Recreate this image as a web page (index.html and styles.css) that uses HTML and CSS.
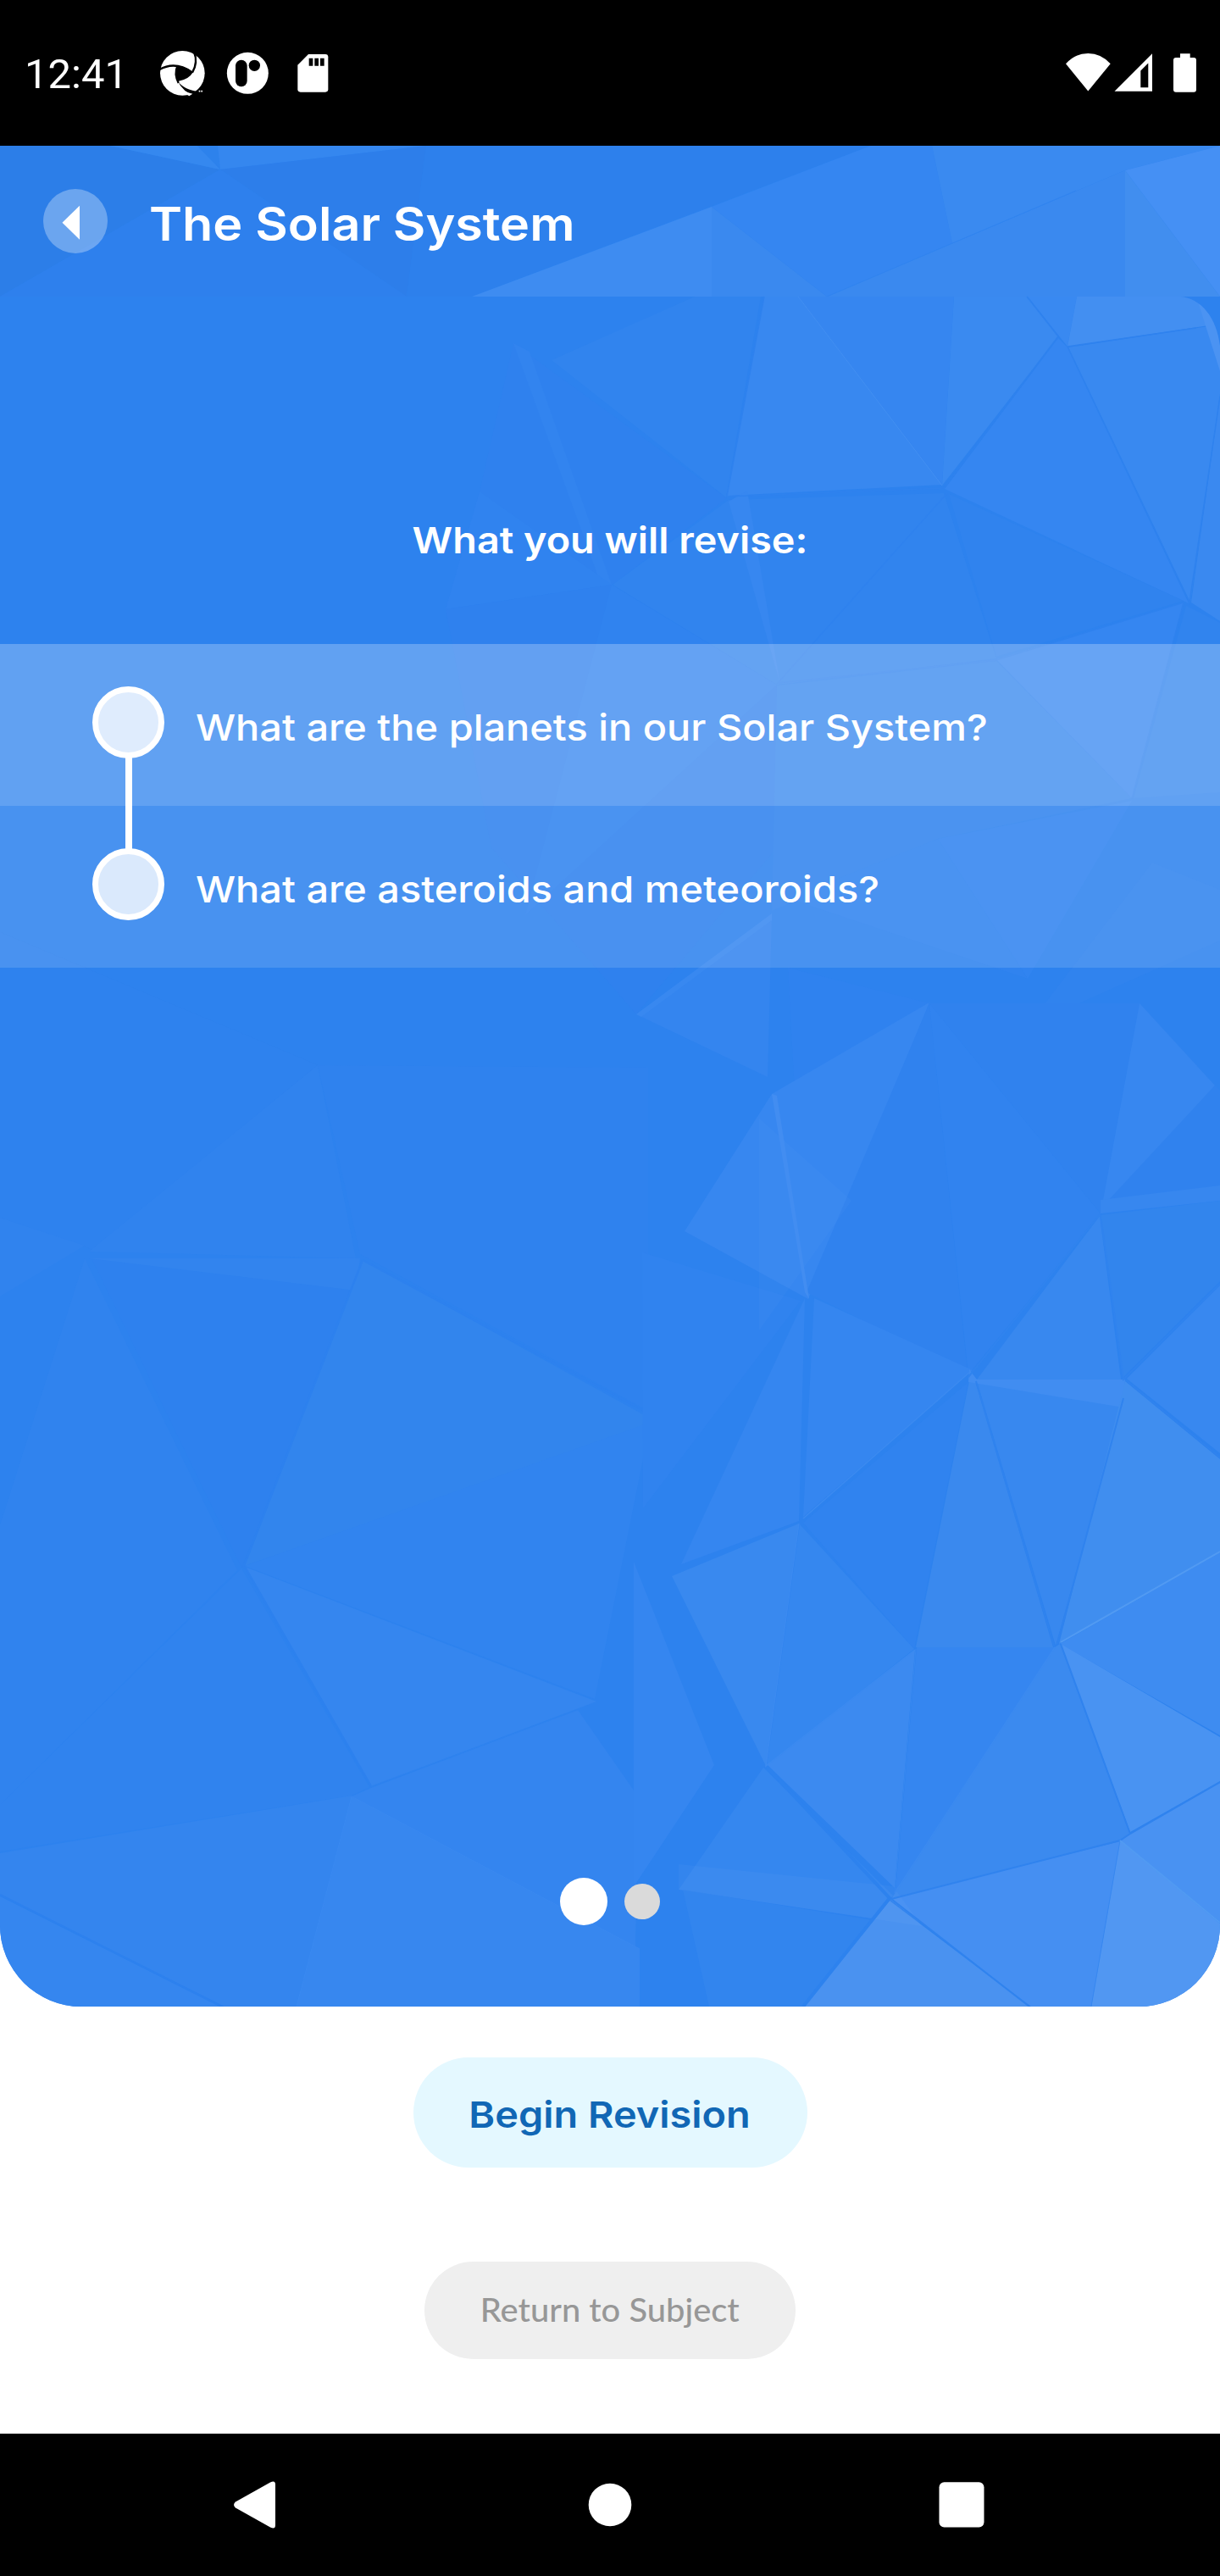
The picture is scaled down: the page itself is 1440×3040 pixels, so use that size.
FILE: index.html
```html
<!DOCTYPE html>
<html lang="en">
<head>
<meta charset="utf-8">
<title>The Solar System</title>
<link rel="stylesheet" href="styles.css">
</head>
<body>
<div class="screen">
  <div class="status-bar">
    <span class="clock">12:41</span>
    <svg class="notifications" width="220" height="80" viewBox="180 46 220 80" aria-hidden="true">
      <g transform="translate(10 50) scale(.33333)">
        <circle cx="616" cy="109" r="79" fill="#fff"/>
        <path d="M596 84 Q632 84 652 107 Q640 130 600 138 Q588 112 596 84Z" fill="#000"/>
        <g fill="none" stroke="#000" stroke-width="7">
          <path d="M534 97Q590 64 652 107"/>
          <path d="M657 34Q672 70 651 107"/>
          <path d="M598 84Q586 112 602 144"/>
        </g>
        <path d="M599 136Q618 168 680 176L664 192Q616 176 599 136Z" fill="#000"/>
        <path d="M602 150Q616 176 652 182L640 190Q610 176 602 150Z" fill="#fff"/>
        <path d="M674 173h5M682 173h5" stroke="#fff" stroke-width="5"/>
        <circle cx="847" cy="109" r="73.500" fill="#fff"/>
        <rect x="804" y="62" width="41" height="95" rx="20.500"/>
        <circle cx="871" cy="82" r="20"/>
        <path d="M1062 42H1122Q1132 42 1132 52V166Q1132 176 1122 176H1034Q1024 176 1024 166V80Z" fill="#fff"/>
        <path d="M1064 56h14v27h-14zM1084 56h14v27h-14zM1104 56h14v27h-14z"/>
      </g>
    </svg>
    <svg class="indicators" width="170" height="60" viewBox="1250 56 170 60" fill="#fff" aria-hidden="true">
      <path d="M1258 75.300Q1269 63 1284.300 63T1310.700 75.300L1284.300 107.500Z"/>
      <path fill-rule="evenodd" d="M1315.500 107.800L1360 63.300V107.800ZM1346.300 83.500V103.200H1355.300V74.500Z"/>
      <path d="M1393 63.300h11.700V68h4.300q3 0 3 3v34.700q0 3-3 3h-21q-3 0-3-3V71q0-3 3-3h5z"/>
    </svg>
  </div>

  <main class="stage">
    <svg class="facets" width="1440" height="2196" viewBox="0 172 1440 2196" aria-hidden="true">
      <g id="header-facets">
        <path fill="#2c7ee8" d="M0 172H130L260 200L0 350Z"/>
        <path fill="#3588ef" d="M130 172H233L260 200Z"/>
        <path fill="#2d82ec" d="M233 172H257L260 200Z"/>
        <path fill="#3587ef" d="M257 172H503L260 200Z"/>
        <path fill="#2d7eea" d="M503 172L260 200L480 350Z"/>
        <path fill="#2e80ed" d="M0 350L260 200L480 350Z"/>
        <path fill="#2d80ec" d="M503 172H1028L557 350H480Z"/>
        <path fill="#3e8cf1" d="M557 350L840 244V350Z"/>
        <path fill="#3a89ef" d="M840 244L976 350H840Z"/>
        <path fill="#3586f1" d="M840 244L1028 172H1100L1124 287L976 350Z"/>
        <path fill="#3a8af0" d="M1100 172H1440L1328 201L1124 287Z"/>
        <path fill="#3a89ef" d="M976 350L1328 201V350Z"/>
        <path fill="#418eef" d="M1328 201L1440 350H1328Z"/>
        <path fill="#4590f4" d="M1328 201L1440 172V350Z"/>
        <path stroke="#3184ef" d="M976 350L1270 225"/>
      </g>
      <g id="upper-facets">
        <path fill="#2d82ee" d="M0 350H1440V900H0Z"/>
        <path fill="#2f81ee" d="M606 405L858 588L723 690L526 719L566 580Z"/>
        <path fill="#3284ef" d="M606 405L625 415L722 690L712 697Z"/>
        <path fill="#3083ef" d="M566 580L722 690L526 719Z"/>
        <path fill="#2f81ee" d="M526 719L722 690L917 808V1000L751 1197L580 1000Z"/>
        <path fill="#3083ef" d="M722 690L917 808L620 1080Z"/>
        <path fill="#3184ee" d="M651 425L820 350H898L857 587Z"/>
        <path fill="#3888f0" d="M902 350H942L1112 572L858 585Z"/>
        <path fill="#3686f0" d="M942 350H1126L1112 572Z"/>
        <path fill="#3a8af0" d="M1126 350H1212L1249 397L1112 573Z"/>
        <path fill="#3989f1" d="M1213 350H1271L1260 409Z"/>
        <path fill="#438ff1" d="M1271 350H1440V382L1260 409Z"/>
        <path fill="#3989f0" d="M1261 410L1440 383V465L1405 711Z"/>
        <path fill="#4b93f2" d="M1412 350H1440V438Z"/>
        <path fill="#3586f1" d="M1249 399L1260 410L1403 712L1115 577Z"/>
        <path fill="#3a89f0" d="M1440 468L1406 711L1440 733Z"/>
        <path fill="#3184ee" d="M723 690L860 590L1114 582L1176 777L917 808Z"/>
        <path fill="#3083ee" d="M1120 583L1397 709L1176 775Z"/>
        <path fill="#3787f0" d="M860 592L882 579L921 808Z"/>
        <path fill="#3184ee" d="M917 809L1176 780L1336 942L1107 990L911 1075Z"/>
        <path fill="#3586f1" d="M1176 778L1397 711L1336 942Z"/>
        <path fill="#3184ee" d="M1400 715L1440 735V935L1338 942Z"/>
        <path fill="#3184f0" d="M1107 990L1336 945L1213 1155Z"/>
        <path fill="#3083ef" d="M930 1060L1107 990L1213 1155Z"/>
        <path fill="#3083ee" d="M1213 1211L1360 1018L1440 1050V1110Z"/>
        <path fill="none" stroke="#2f82ee" stroke-width="1.500" d="M902 350L858 586L1114 576L1249 397L1212 350M1260 409L1404 711L1440 468M1118 582L918 806L1176 779L1397 711L1336 942M1260 409L1412 387"/>
        <path fill="none" stroke="#438ff1" d="M942 350L1112 573"/>
        <path fill="#2d82ee" d="M1393 350H1440V408C1436 375 1418 352 1393 350Z"/>
        <path fill="#3485ef" d="M751 1197L911 1080L906 1271Z"/>
        <path fill="#3888f0" d="M751 1197L911 1078V1086L757 1200Z"/>
      </g>
      <g id="left-facets">
        <path fill="#2f81ee" d="M0 1100L375 1257L110 1475L0 1437Z" opacity=".5"/>
        <path fill="#3083ee" d="M0 1437L100 1470L0 1530Z"/>
        <path fill="#3083ee" d="M105 1477L375 1257L420 1485Z"/>
        <path fill="#2e81ee" d="M108 1485L422 1523L285 1850Z"/>
        <path fill="#3284ee" d="M105 1485H425L420 1523Z"/>
        <path fill="#3083ee" d="M100 1485L280 1853L0 2130V1800Z"/>
        <path fill="#2f82ee" d="M425 1480L375 1257L765 1260V1665Z"/>
        <path fill="#3285ed" d="M428 1487L764 1672L770 1680L289 1848Z"/>
        <path fill="#3184ef" d="M770 1667L702 2005L289 1848L764 1680Z"/>
        <path fill="#3586ef" d="M289 1849L704 2008L438 2108Z"/>
        <path fill="#3083ee" d="M285 1851L436 2109L415 2119L0 2185V2130Z"/>
        <path fill="#3485ee" d="M0 2187L415 2119L350 2368H265L0 2236Z"/>
        <path fill="#3586ef" d="M0 2238L260 2368H0Z"/>
        <path fill="#3485ef" d="M438 2110L682 2018L753 2120L750 2300L415 2120Z"/>
        <path fill="#3787ef" d="M415 2120L755 2300V2368H350Z"/>
        <path fill="none" stroke="#2d81ee" stroke-width="2.500" d="M428 1487L764 1667M0 2236L262 2368M428 1487L287 1850M289 1849L438 2108"/>
        <path fill="none" stroke="#3083ee" d="M438 2108L682 2018"/>
        <path fill="none" stroke="#3a89f0" d="M415 2120L350 2368M415 2120L755 2300"/>
      </g>
      <g id="right-facets">
        <path fill="#3083ef" d="M758 1478L945 1535L759 1780Z"/>
        <path fill="#2f82ef" d="M930 1142L1097 1184L1160 1220L940 1325Z"/>
        <path fill="#3787f0" d="M1097 1183L911 1291L808 1453L954 1533Z"/>
        <path fill="#3082ee" d="M1097 1184L1142 1620L952 1525Z"/>
        <path fill="#3183ef" d="M1097 1184L1299 1432L1143 1622Z"/>
        <path fill="#3082ee" d="M1097 1184H1345L1299 1432Z"/>
        <path fill="#3787f0" d="M1345 1184L1434 1281L1299 1432Z"/>
        <path fill="#3082ee" d="M1434 1281L1440 1287V1400L1305 1420Z"/>
        <path fill="#3787ef" d="M1299 1416L1440 1399V1417L1299 1432Z"/>
        <path fill="#3285ed" d="M1299 1434L1440 1417V1512L1325 1626Z"/>
        <path fill="#3888ef" d="M1298 1435L1323 1628H1153Z"/>
        <path fill="#3586f0" d="M961 1532L1148 1617L948 1790Z"/>
        <path fill="#3586f0" d="M950 1532L943 1795L804 1846Z"/>
        <path fill="#3083ef" d="M1143 1631L1079 1946L948 1797Z"/>
        <path fill="#3a89ee" d="M1144 1630H1151L1243 1944H1081Z"/>
        <path fill="#3888ef" d="M1153 1630L1324 1660L1246 1942Z"/>
        <path fill="#418df1" d="M1144 1616L1153 1628H1328L1326 1661L1143 1631Z"/>
        <path fill="#3888f0" d="M1330 1627L1440 1517V1715Z"/>
        <path fill="#408eef" d="M1328 1630L1440 1722V1832L1250 1940Z"/>
        <path fill="#3989ef" d="M793 1860L943 1798L904 2084Z"/>
        <path fill="#3587ef" d="M944 1799L1079 1946L905 2084Z"/>
        <path fill="#3c8af0" d="M1080 1947L1056 2228L906 2083Z"/>
        <path fill="#3586f0" d="M1082 1944H1245L1057 2232Z"/>
        <path fill="#3b8aef" d="M1245 1944L1251 1940L1334 2165L1322 2172L1052 2241Z"/>
        <path fill="#3e8cf1" d="M1251 1940L1440 1832V2048Z"/>
        <path fill="#4993f2" d="M1252 1940L1440 2050V2102L1334 2162Z"/>
        <path fill="#4992f2" d="M1334 2164L1440 2104V2268L1322 2172Z"/>
        <path fill="#5197f2" d="M1322 2172L1440 2270V2368H1288Z"/>
        <path fill="#458ff2" d="M1322 2173L1288 2368H1217L1050 2241Z"/>
        <path fill="#4a92f0" d="M1050 2243L1215 2368H948Z"/>
        <path fill="#3587ef" d="M901 2086L1054 2237L1030 2264L801 2230Z"/>
        <path fill="#3285ee" d="M806 2230L1030 2266L948 2368H837Z"/>
        <path fill="#fff" opacity=".03" d="M801 2200L1054 2226L1088 2273L801 2230Z"/>
        <path fill="#3586f0" d="M748 1843L843 2083L751 2222H748Z"/>
        <path fill="#fff" opacity=".02" d="M896 1320L1005 1417L896 1570Z"/>
        <path fill="#428df1" d="M911 1291L917 1293L955 1533L950 1525Z"/>
        <path fill="none" stroke="#3083ee" stroke-width="2" d="M1328 1628L1440 1720M1326 1650L1248 1940M1152 1630L1244 1942M1252 1940L1334 2164L1440 2103M1334 2164L1322 2172L1052 2241L1215 2368M1299 1434L1326 1628L1440 1515M1143 1625L1299 1432"/>
        <path fill="none" stroke="#3888f0" stroke-width="1" d="M1322 2172L1288 2368M1081 1946L1056 2234"/>
        <path fill="none" stroke="#2d82ee" stroke-width="4" d="M904 2084L1050 2240L948 2368"/>
        <path fill="none" stroke="#519af2" stroke-width="2" d="M1252 1938L1440 1831M1322 2172L1440 2269"/>
        <path fill="none" stroke="#3b8af0" stroke-width="1.500" d="M943 1798L904 2084L1080 1947M1245 1944L1056 2234M1146 1618L948 1792"/>
      </g>
    </svg>

    <header class="app-bar">
      <button class="back" aria-label="Back">
        <svg width="76" height="76" viewBox="0 0 76 76"><path d="M22.500 39.700L43 19.700V59.700Z" fill="#fff"/></svg>
      </button>
      <h1 class="title">The Solar System</h1>
    </header>

    <section class="panel">
      <h2 class="subtitle">What you will revise:</h2>
      <ol class="topics">
        <li class="topic topic-first"><span class="marker marker-linked"></span><span class="label">What are the planets in our Solar System?</span></li>
        <li class="topic"><span class="marker"></span><span class="label">What are asteroids and meteoroids?</span></li>
      </ol>
      <div class="pager"><span class="page page-current"></span><span class="page"></span></div>
    </section>
  </main>

  <div class="actions">
    <button class="btn btn-primary"><span class="btn-text">Begin Revision</span></button>
    <button class="btn btn-secondary"><span class="btn-text">Return to Subject</span></button>
  </div>

  <nav class="nav-bar">
    <svg width="1440" height="168" viewBox="0 2872 1440 168" fill="#fff" aria-hidden="true">
      <path d="M278 2952.500L319 2929.500Q325 2926.500 325 2932V2980Q325 2985.500 319 2982.500L278 2959.500Q274 2956 278 2952.500Z"/>
      <circle cx="720" cy="2956" r="25.300"/>
      <rect x="1108.500" y="2929.300" width="53" height="53.300" rx="6"/>
    </svg>
  </nav>
</div>
</body>
</html>
```
FILE: styles.css
```css
* { box-sizing: border-box; }

body {
  margin: 0;
  background: #fff;
  font-family: Inter, "Open Sans", sans-serif;
}

h1, h2, ol { margin: 0; padding: 0; }

button { border: 0; padding: 0; font-family: inherit; }

svg { display: block; flex-shrink: 0; }

.screen {
  width: 1440px;
  height: 3040px;
  display: flex;
  flex-direction: column;
  overflow: hidden;
}

.status-bar {
  height: 172px;
  padding: 0 20px 0 29px;
  display: flex;
  align-items: center;
  background: #000;
  color: #fff;
}

.clock {
  width: 151px;
  flex-shrink: 0;
  font: 400 49px/56px Roboto, sans-serif;
  padding-top: 3px;
}

.indicators { margin-left: auto; }

.stage {
  position: relative;
  height: 2196px;
  border-radius: 0 0 96px 96px;
  overflow: hidden;
  background: #2d82ee;
  color: #fff;
}

.facets {
  position: absolute;
  inset: 0;
}

.app-bar {
  position: relative;
  height: 178px;
  padding-left: 51px;
  display: flex;
  align-items: center;
  gap: 49px;
}

.back {
  width: 76px;
  height: 76px;
  border-radius: 50%;
  background: rgba(255, 255, 255, .3);
}

/* The interface typeface is set slightly extended. */
.title {
  font-size: 55px;
  font-weight: 600;
  line-height: 70px;
  padding-top: 6px;
  white-space: nowrap;
  transform: scaleX(1.077);
  transform-origin: left;
}

.panel {
  position: relative;
  height: 2018px;
  padding-top: 257px;
  display: flex;
  flex-direction: column;
}

.subtitle {
  height: 153px;
  font-size: 43px;
  font-weight: 600;
  line-height: 60px;
  text-align: center;
  white-space: nowrap;
  transform: scaleX(1.087);
}

.topics { list-style: none; }

.topic {
  height: 191px;
  padding-left: 109px;
  display: flex;
  align-items: center;
  gap: 37px;
  background: rgba(255, 255, 255, .13);
}

.topic-first { background: rgba(255, 255, 255, .25); }

.marker {
  position: relative;
  width: 85px;
  height: 85px;
  margin-bottom: 7px;
  border: 7px solid #fff;
  border-radius: 50%;
  background: rgba(255, 255, 255, .8);
}

.marker-linked::after {
  content: "";
  position: absolute;
  left: 31.500px;
  top: 77px;
  width: 8px;
  height: 109px;
  background: #fff;
}

.label {
  font-size: 43px;
  font-weight: 500;
  line-height: 60px;
  padding-top: 5px;
  white-space: nowrap;
  transform: scaleX(1.091);
  transform-origin: left;
}

.pager {
  height: 56px;
  margin-top: auto;
  margin-bottom: 96px;
  display: flex;
  justify-content: center;
  align-items: center;
  gap: 20px;
}

.page {
  width: 42px;
  height: 42px;
  border-radius: 50%;
  background: #dadada;
}

.page-current {
  width: 56px;
  height: 56px;
  background: #fff;
}

.actions {
  height: 504px;
  padding-top: 60px;
  display: flex;
  flex-direction: column;
  align-items: center;
  gap: 111px;
}

.btn { white-space: nowrap; }

.btn-text { display: inline-block; }

.btn-primary {
  width: 465px;
  height: 130px;
  border-radius: 65px;
  padding-top: 4px;
  background: #e4f8ff;
  color: #1167b5;
  font-size: 43px;
  font-weight: 600;
}

.btn-primary .btn-text { transform: scaleX(1.09); }

.btn-secondary {
  width: 438px;
  height: 115px;
  border-radius: 58px;
  padding-bottom: 3px;
  background: #efefef;
  color: #979797;
  font-family: Lato, sans-serif;
  font-size: 38px;
  font-weight: 500;
}

.btn-secondary .btn-text { transform: scaleX(1.05); }

.nav-bar {
  height: 168px;
  background: #000;
}
```
